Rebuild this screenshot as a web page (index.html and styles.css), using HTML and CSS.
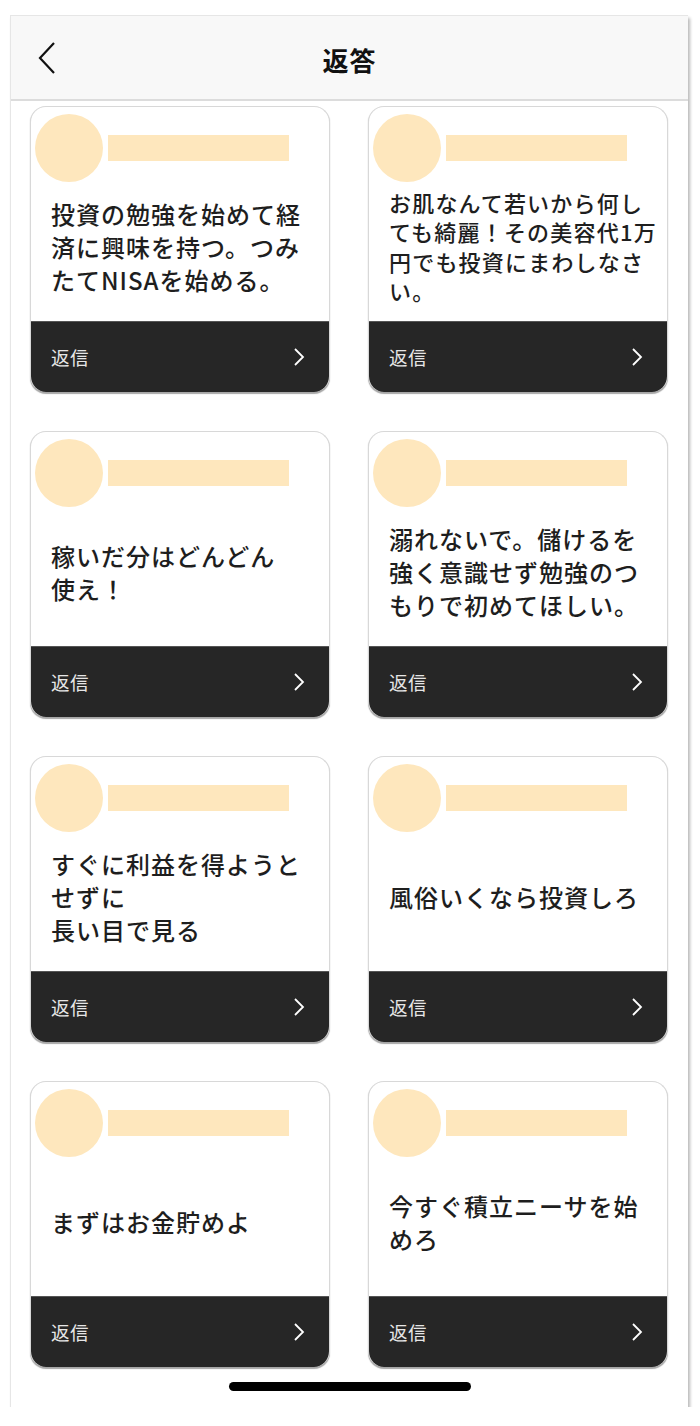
FILE: index.html
```html
<!DOCTYPE html>
<html lang="ja">
<head>
<meta charset="utf-8">
<title>返答</title>
<link rel="stylesheet" href="styles.css">
</head>
<body>
<div class="phone">
  <header class="topbar">
    <svg class="back" width="20" height="34" viewBox="0 0 20 34"><path d="M17 2 L3 17 L17 32" fill="none" stroke="#111" stroke-width="2.2"/></svg>
    <h1 class="title">返答</h1>
  </header>
  <main class="grid">
    <div class="card">
      <div class="card-head"><span class="avatar"></span><span class="name"></span></div>
      <div class="card-body"><p class="msg">投資の勉強を始めて経<br>済に興味を持つ。つみ<br>たてNISAを始める。</p></div>
      <div class="card-foot"><span>返信</span><svg width="12" height="20" viewBox="0 0 12 20"><path d="M2 2 L10 10 L2 18" fill="none" stroke="#fff" stroke-width="1.8"/></svg></div>
    </div>
    <div class="card">
      <div class="card-head"><span class="avatar"></span><span class="name"></span></div>
      <div class="card-body"><p class="msg small">お肌なんて若いから何し<br>ても綺麗！その美容代1万<br>円でも投資にまわしなさ<br>い。</p></div>
      <div class="card-foot"><span>返信</span><svg width="12" height="20" viewBox="0 0 12 20"><path d="M2 2 L10 10 L2 18" fill="none" stroke="#fff" stroke-width="1.8"/></svg></div>
    </div>
    <div class="card">
      <div class="card-head"><span class="avatar"></span><span class="name"></span></div>
      <div class="card-body"><p class="msg">稼いだ分はどんどん<br>使え！</p></div>
      <div class="card-foot"><span>返信</span><svg width="12" height="20" viewBox="0 0 12 20"><path d="M2 2 L10 10 L2 18" fill="none" stroke="#fff" stroke-width="1.8"/></svg></div>
    </div>
    <div class="card">
      <div class="card-head"><span class="avatar"></span><span class="name"></span></div>
      <div class="card-body"><p class="msg">溺れないで。儲けるを<br>強く意識せず勉強のつ<br>もりで初めてほしい。</p></div>
      <div class="card-foot"><span>返信</span><svg width="12" height="20" viewBox="0 0 12 20"><path d="M2 2 L10 10 L2 18" fill="none" stroke="#fff" stroke-width="1.8"/></svg></div>
    </div>
    <div class="card">
      <div class="card-head"><span class="avatar"></span><span class="name"></span></div>
      <div class="card-body"><p class="msg">すぐに利益を得ようと<br>せずに<br>長い目で見る</p></div>
      <div class="card-foot"><span>返信</span><svg width="12" height="20" viewBox="0 0 12 20"><path d="M2 2 L10 10 L2 18" fill="none" stroke="#fff" stroke-width="1.8"/></svg></div>
    </div>
    <div class="card">
      <div class="card-head"><span class="avatar"></span><span class="name"></span></div>
      <div class="card-body"><p class="msg">風俗いくなら投資しろ</p></div>
      <div class="card-foot"><span>返信</span><svg width="12" height="20" viewBox="0 0 12 20"><path d="M2 2 L10 10 L2 18" fill="none" stroke="#fff" stroke-width="1.8"/></svg></div>
    </div>
    <div class="card">
      <div class="card-head"><span class="avatar"></span><span class="name"></span></div>
      <div class="card-body"><p class="msg">まずはお金貯めよ</p></div>
      <div class="card-foot"><span>返信</span><svg width="12" height="20" viewBox="0 0 12 20"><path d="M2 2 L10 10 L2 18" fill="none" stroke="#fff" stroke-width="1.8"/></svg></div>
    </div>
    <div class="card">
      <div class="card-head"><span class="avatar"></span><span class="name"></span></div>
      <div class="card-body"><p class="msg">今すぐ積立ニーサを始<br>めろ</p></div>
      <div class="card-foot"><span>返信</span><svg width="12" height="20" viewBox="0 0 12 20"><path d="M2 2 L10 10 L2 18" fill="none" stroke="#fff" stroke-width="1.8"/></svg></div>
    </div>
  </main>
  <div class="home-wrap"><span class="home"></span></div>
</div>
</body>
</html>
```
FILE: styles.css
```css
html, body {
  margin: 0;
  padding: 0;
  background: #ffffff;
}
body {
  font-family: "Noto Sans CJK JP", "Noto Sans", sans-serif;
  color: #1a1a1a;
}
.phone {
  box-sizing: border-box;
  margin: 15px 0 0 10px;
  width: 678px;
  height: 1392px;
  background: #ffffff;
  border-top: 1px solid #e6e6e6;
  border-left: 1px solid #e6e6e6;
  box-shadow: 2px 3px 3px rgba(0, 0, 0, 0.28);
  display: flex;
  flex-direction: column;
}
.topbar {
  box-sizing: border-box;
  height: 85px;
  background: #f8f8f8;
  border-bottom: 2px solid #dcdcdc;
  display: flex;
  align-items: center;
  justify-content: center;
  position: relative;
}
.back {
  position: absolute;
  left: 26px;
  top: 25px;
}
.title {
  margin: 0;
  font-size: 26px;
  font-weight: 700;
  color: #111;
  letter-spacing: 1px;
  padding-top: 4px;
}
.grid {
  display: grid;
  grid-template-columns: 300px 300px;
  column-gap: 38px;
  row-gap: 39px;
  padding: 5px 20px 0 19px;
}
.card {
  box-sizing: border-box;
  height: 286px;
  border: 1.5px solid #d8d8d8;
  border-bottom: none;
  border-radius: 16px;
  overflow: hidden;
  display: flex;
  flex-direction: column;
  background: #fff;
  box-shadow: 0 1.5px 1px rgba(0, 0, 0, 0.35);
}
.card-head {
  display: flex;
  align-items: center;
  padding: 7px 0 0 4px;
  height: 68px;
}
.avatar {
  width: 68px;
  height: 68px;
  border-radius: 50%;
  background: #fee7bd;
  flex: none;
}
.name {
  width: 181px;
  height: 26px;
  margin-left: 5px;
  background: #fee7bd;
}
.card-body {
  flex: 1;
  display: flex;
  align-items: center;
  padding: 0 0 10px 20px;
}
.msg {
  margin: 0;
  font-size: 24px;
  line-height: 33px;
  font-weight: 500;
  letter-spacing: 1px;
  color: #1e1e1e;
}
.msg.small {
  font-size: 22px;
  line-height: 29.5px;
  letter-spacing: 1.2px;
}
.card-foot {
  flex: none;
  height: 70px;
  background: #262626;
  border-top: 1px solid #555;
  display: flex;
  align-items: center;
  justify-content: space-between;
  padding: 0 24px 0 20px;
  color: #e6e6e6;
  font-size: 18.5px;
}
.card-foot span {
  letter-spacing: 0.5px;
}
.home-wrap {
  display: flex;
  justify-content: center;
  padding-top: 15px;
}
.home {
  width: 242px;
  height: 9px;
  border-radius: 5px;
  background: #000;
}
```
